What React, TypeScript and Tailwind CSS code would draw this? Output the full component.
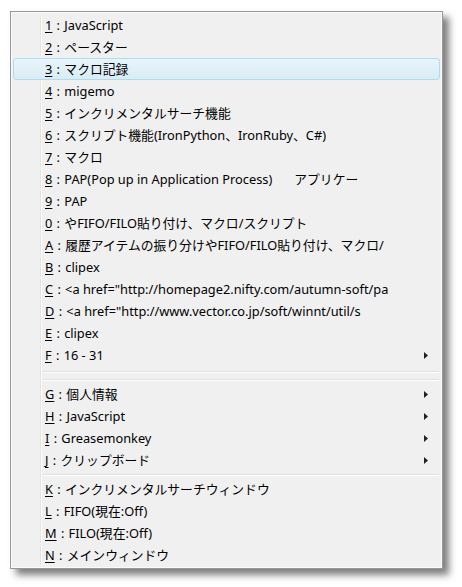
type Item = {
  key: string
  label: React.ReactNode
  sub?: boolean
  active?: boolean
}

type Entry = Item | "sep" | "dsep"

const ENTRIES: Entry[] = [
  { key: "1", label: "JavaScript" },
  { key: "2", label: "ペースター" },
  { key: "3", label: "マクロ記録", active: true },
  { key: "4", label: "migemo" },
  { key: "5", label: "インクリメンタルサーチ機能" },
  { key: "6", label: "スクリプト機能(IronPython、IronRuby、C#)" },
  { key: "7", label: "マクロ" },
  {
    key: "8",
    label: (
      <>
        PAP(Pop up in Application Process)<span className="ml-[22px]">アプリケー</span>
      </>
    ),
  },
  { key: "9", label: "PAP" },
  { key: "0", label: "やFIFO/FILO貼り付け、マクロ/スクリプト" },
  { key: "A", label: "履歴アイテムの振り分けやFIFO/FILO貼り付け、マクロ/" },
  { key: "B", label: "clipex" },
  { key: "C", label: '<a href="http://homepage2.nifty.com/autumn-soft/pa' },
  { key: "D", label: '<a href="http://www.vector.co.jp/soft/winnt/util/s' },
  { key: "E", label: "clipex" },
  { key: "F", label: "16 - 31", sub: true },
  "dsep",
  { key: "G", label: "個人情報", sub: true },
  { key: "H", label: "JavaScript", sub: true },
  { key: "I", label: "Greasemonkey", sub: true },
  { key: "J", label: "クリップボード", sub: true },
  "sep",
  { key: "K", label: "インクリメンタルサーチウィンドウ" },
  { key: "L", label: "FIFO(現在:Off)" },
  { key: "M", label: "FILO(現在:Off)" },
  { key: "N", label: "メインウィンドウ" },
]

function SepLine() {
  return (
    <div className="ml-[28px] mr-[1px]">
      <div className="h-px bg-[#e0e0e0]" />
      <div className="h-px bg-white" />
    </div>
  )
}

function Gutter() {
  return <div className="absolute left-[27px] top-0 h-full w-[2px] border-l border-[#e2e3e3] bg-white" />
}

function Row({ item }: { item: Item }) {
  return (
    <div
      className={
        "relative flex h-[22px] items-center rounded-[3px] border " +
        (item.active
          ? "border-[#aedcf0] bg-gradient-to-b from-[#e8f4fa] to-[#d9ecf4]"
          : "border-transparent")
      }
    >
      {!item.active && <div className="absolute left-[26px] top-0 h-full w-[2px] border-l border-[#e2e3e3] bg-white" />}
      <span className="pl-[31px] whitespace-nowrap text-[12.8px] leading-[22px] text-black">
        <span className="underline underline-offset-2">{item.key}</span>
        <span className="inline-block w-[12px] text-center">:</span>
        {item.label}
      </span>
      {item.sub && (
        <svg className="absolute right-[11px] top-[7px]" width="4" height="7" viewBox="0 0 4 7">
          <path d="M0 0 L4 3.5 L0 7 Z" fill="#222" />
        </svg>
      )}
    </div>
  )
}

export default function App() {
  return (
    <div
      className="h-[587px] w-[462px] bg-white pl-[10px] pt-[11px]"
      style={{ fontFamily: '"Noto Sans", "Noto Sans CJK JP", sans-serif' }}
    >
      <div className="w-[433px] border border-[#979797] bg-[#f0f0f0] shadow-[6px_6px_7px_rgba(0,0,0,0.5)]">
        <div className="border border-white/70 p-px">
          {ENTRIES.map((e, i) => {
            if (e === "dsep") {
              return (
                <div key={i} className="relative h-[17px]">
                  <Gutter />
                  <div className="pt-[5px]">
                    <SepLine />
                  </div>
                  <div className="pt-[6px]">
                    <SepLine />
                  </div>
                </div>
              )
            }
            if (e === "sep") {
              return (
                <div key={i} className="relative h-[7px] pt-[3px]">
                  <Gutter />
                  <SepLine />
                </div>
              )
            }
            return <Row key={i} item={e} />
          })}
        </div>
      </div>
    </div>
  )
}
